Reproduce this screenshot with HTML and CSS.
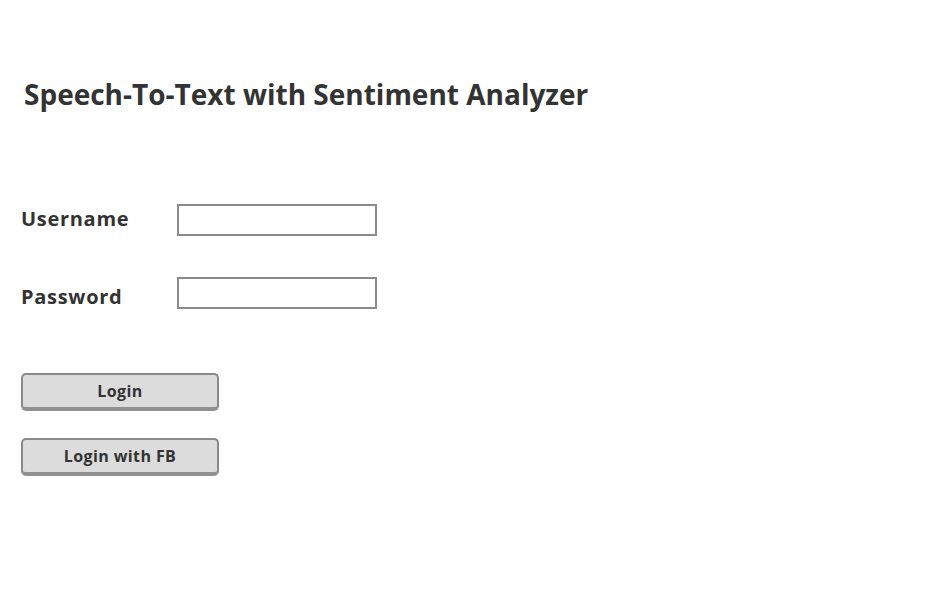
FILE: index.html
```html
<!DOCTYPE html>
<html>
<head>
<meta charset="utf-8">
<link rel="stylesheet" href="styles.css">
</head>
<body>
<div class="page">
  <h1 class="title">Speech-To-Text with Sentiment Analyzer</h1>
  <div class="form">
    <div class="row row-user">
      <label class="label">Username</label>
      <input class="field" type="text">
    </div>
    <div class="row row-pass">
      <label class="label">Password</label>
      <input class="field" type="password">
    </div>
  </div>
  <div class="buttons">
    <button class="btn">Login</button>
    <button class="btn">Login with FB</button>
  </div>
</div>
</body>
</html>
```
FILE: styles.css
```css
html, body {
  margin: 0;
  padding: 0;
  background: #fff;
}
.page {
  font-family: "Open Sans", Lato, sans-serif;
  color: #333;
  padding: 76px 0 0 21px;
}
.title {
  margin: 0 0 0 3px;
  font-size: 28px;
  font-weight: 700;
  line-height: 36px;
}
.form {
  margin-top: 92px;
  display: flex;
  flex-direction: column;
  gap: 41px;
}
.row {
  display: flex;
  align-items: center;
}
.label {
  width: 156px;
  font-size: 20px;
  font-weight: 700;
  line-height: 28px;
  letter-spacing: 0.7px;
}
.row-pass .label {
  position: relative;
  top: 4px;
}
.row-user .label {
  position: relative;
  top: -1px;
}
.field {
  box-sizing: border-box;
  width: 200px;
  height: 32px;
  margin: 0;
  border: 2px solid #8a8a8a;
  background: #fff;
  outline: none;
}
.buttons {
  margin-top: 64px;
  display: flex;
  flex-direction: column;
  gap: 27px;
  align-items: flex-start;
}
.btn {
  box-sizing: border-box;
  width: 198px;
  height: 38px;
  margin: 0;
  padding: 0;
  background: #dcdcdc;
  border: 2px solid #8a8a8a;
  border-bottom: 4px solid #909090;
  border-radius: 5px;
  font-family: "Open Sans", Lato, sans-serif;
  font-size: 16px;
  font-weight: 700;
  letter-spacing: 0.4px;
  color: #333;
}
```
